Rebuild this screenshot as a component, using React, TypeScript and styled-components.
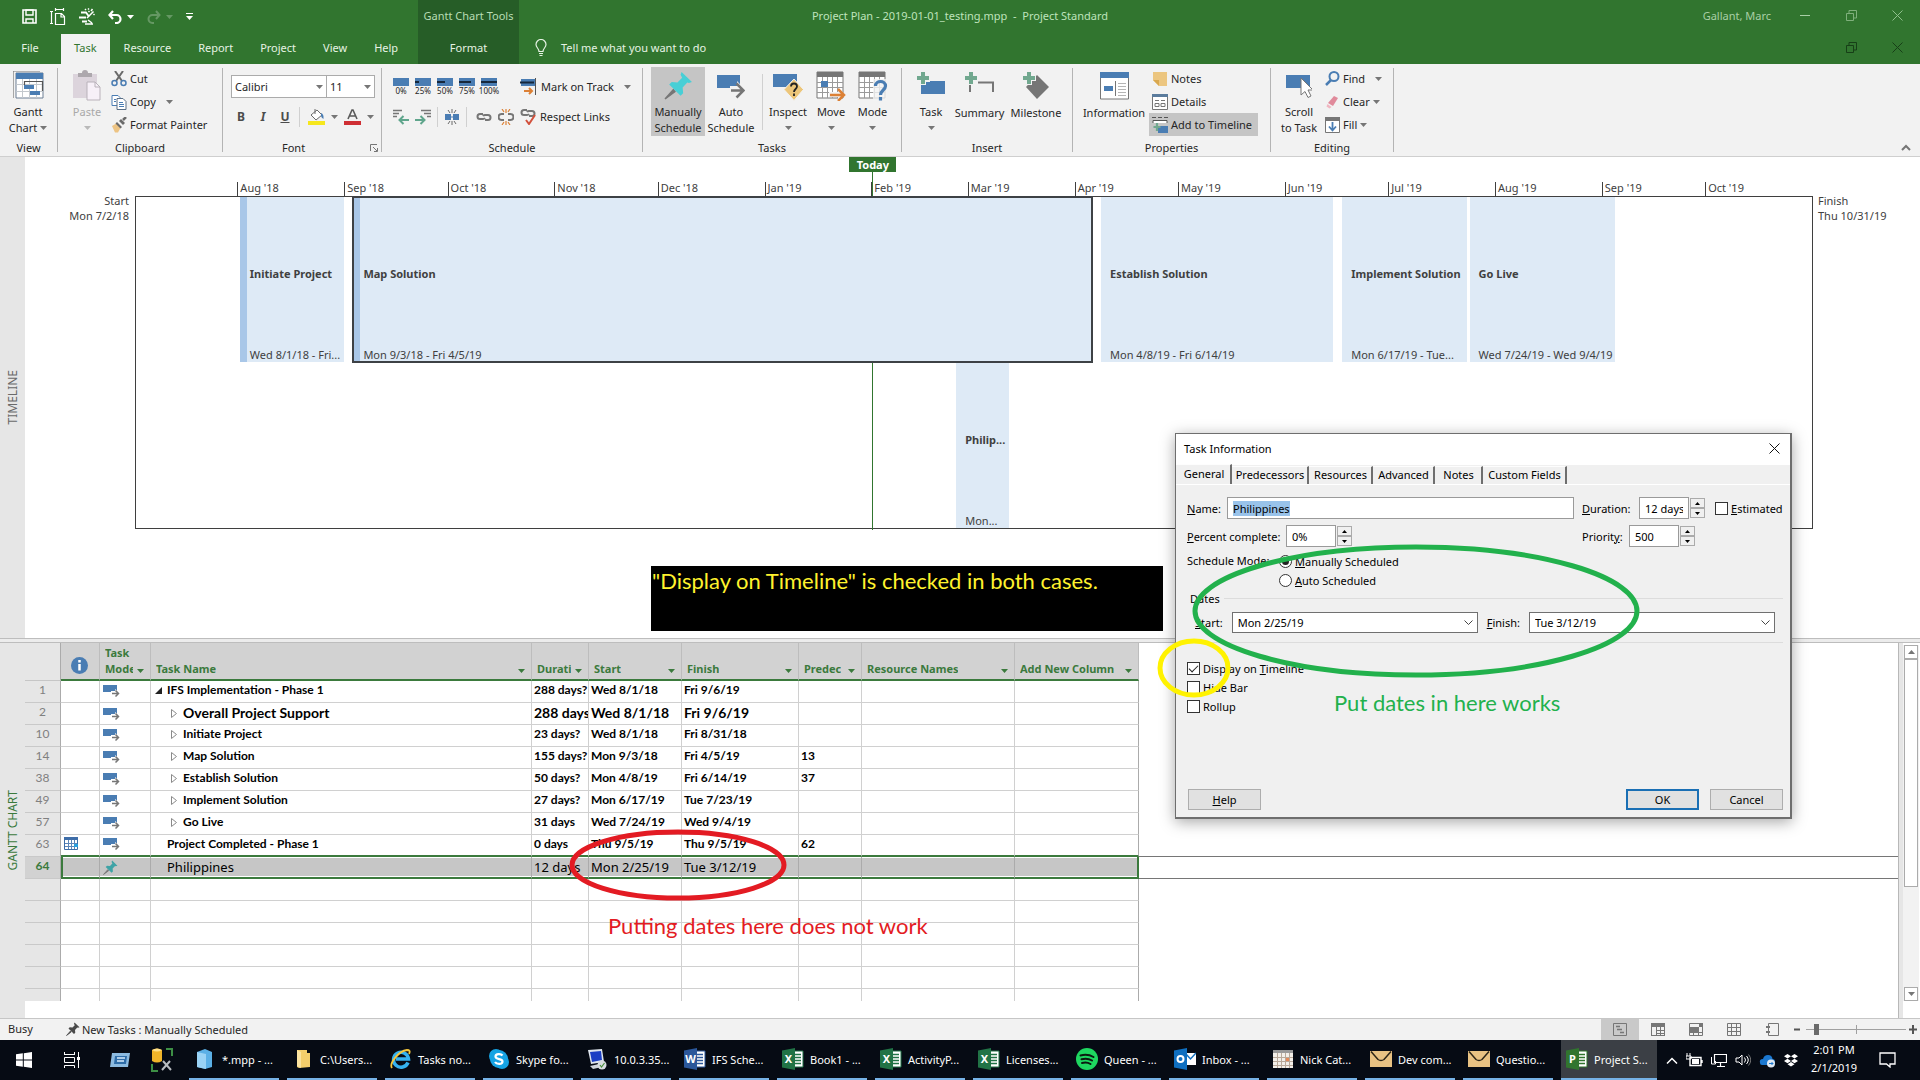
import React, { useEffect, useRef } from "react";
import styled, { createGlobalStyle, css } from "styled-components";

const UI = `"Noto Sans", "Open Sans", sans-serif`;
const SHEET = `Lato, "Noto Sans", sans-serif`;
const GREEN = "#31752f";
const BLUE = "#4a7db3";
const GREY = "#767676";

const GlobalStyle = createGlobalStyle`
  *, *::before, *::after { box-sizing: border-box; }
  body { margin: 0; background: #fff; font-family: ${UI}; font-size: 11px; color: #262626; }
  button, input, select { font: inherit; color: inherit; margin: 0; }
  button { background: none; border: 0; padding: 0; }
  svg { display: block; flex: none; }
`;

const App_ = styled.div`
  position: relative;
  min-height: 100vh;
  display: flex;
  flex-direction: column;
  overflow: hidden;
`;

/* ---------- small shared drawings ---------- */

type IconProps = { w?: number; h?: number; box?: string; children: React.ReactNode };
const Icon = ({ w = 16, h = 16, box, children }: IconProps) => (
  <svg width={w} height={h} viewBox={box ?? `0 0 ${w} ${h}`} fill="none" aria-hidden="true">
    {children}
  </svg>
);

const Caret = ({ color = GREY }: { color?: string }) => (
  <Icon w={7} h={4}>
    <path d="M0 0h7L3.500 4z" fill={color} />
  </Icon>
);

const Pin = ({ size = 16, color = "#48cfd6", needle = "#767676" }) => (
  <Icon w={size} h={size} box="0 0 28 28">
    <path d="M9 18 1 27l9.500-7z" fill={needle} stroke={needle} strokeWidth="1.500" />
    <path d="M17 1l10 9.500-3 1-1.500-.5-4.500 5 .5 5.500-2.500 2.500L5 13l2.500-2.500 5.500.5 4.500-4.500L16 3.500z" fill={color} />
  </Icon>
);

/* ---------- header ---------- */

const Header = styled.header`
  background: ${GREEN};
  color: #e6f3e4;
`;
const TitleRow = styled.div`
  height: 34px;
  display: grid;
  grid-template-columns: 1fr auto 1fr;
`;
const TitleLeft = styled.div`
  display: flex;
`;
const QuickAccess = styled.div`
  width: 418px;
  display: flex;
  align-items: center;
  padding: 0 0 1px 22px;
  gap: 13px;
`;
const QuickButton = styled.button<{ $dim?: boolean }>`
  display: flex;
  align-items: center;
  gap: 5px;
  opacity: ${(p) => (p.$dim ? 0.25 : 1)};
`;
const ContextTitle = styled.div`
  width: 101px;
  background: #265d27;
  color: #b7dcb4;
  display: flex;
  align-items: center;
  justify-content: center;
  padding-bottom: 3px;
  white-space: nowrap;
`;
const DocTitle = styled.h1`
  margin: 0;
  font-size: 11px;
  font-weight: 400;
  color: #bfe3bc;
  align-self: center;
  padding-bottom: 3px;
  white-space: pre;
`;
const TitleRight = styled.div`
  display: flex;
  align-items: center;
  justify-content: flex-end;
  padding-bottom: 3px;
  color: #a9cfa6;
`;
const UserName = styled.span`
  margin-right: 11px;
`;
const WinButton = styled.button`
  width: 46px;
  display: flex;
  align-items: center;
  justify-content: center;
`;
const TabRow = styled.nav`
  height: 30px;
  display: flex;
`;
const Tabs = styled.div`
  width: 418px;
  display: flex;
  gap: 1px;
`;
const Tab = styled.button<{ $active?: boolean; $file?: boolean }>`
  padding: 0 13px 3px;
  min-width: ${(p) => (p.$file ? "60px" : "0")};
  ${(p) => p.$active && css`
    background: #f2f2f2;
    color: ${GREEN};
  `}
`;
const ContextTab = styled.button`
  width: 101px;
  padding-bottom: 3px;
  background: #265d27;
`;
const TellMe = styled.button`
  display: flex;
  align-items: center;
  gap: 14px;
  margin-left: 16px;
  padding-bottom: 3px;
`;
const TabRowEnd = styled.div`
  margin-left: auto;
  padding-bottom: 3px;
  display: flex;
`;

/* ---------- ribbon ---------- */

const Ribbon = styled.div`
  height: 93px;
  background: #f2f2f2;
  border-bottom: 1px solid #cfcfcf;
  display: flex;
`;
const Group = styled.section<{ $w: number }>`
  width: ${(p) => p.$w}px;
  display: flex;
  flex-direction: column;
`;
const GroupBody = styled.div<{ $pad?: number }>`
  height: 76px;
  padding: 3px 0 0 ${(p) => p.$pad ?? 6}px;
  display: flex;
`;
const GroupLabel = styled.div`
  display: flex;
  align-items: center;
  justify-content: center;
  line-height: 12px;
  padding-top: 2px;
`;
const Launcher = styled.button`
  margin-left: auto;
  margin-right: 3px;
`;
const FontLabel = styled(GroupLabel)`
  padding-left: 59px;
`;
const Rule = styled.div`
  width: 1px;
  margin: 4px 0;
  background: #b4b4b4;
`;
const InnerRule = styled.div<{ $h?: number }>`
  width: 1px;
  height: ${(p) => p.$h ?? 20}px;
  background: #d0d0d0;
`;
const TasksRule = styled(InnerRule)`
  margin: 7px 3px 0 5px;
`;
const Big = styled.button<{ $w: number; $on?: boolean; $off?: boolean }>`
  width: ${(p) => p.$w}px;
  height: 69px;
  background: ${(p) => (p.$on ? "#c5c5c5" : "none")};
  color: ${(p) => (p.$off ? "#a9a9a9" : "inherit")};
  display: flex;
  flex-direction: column;
  align-items: center;
  white-space: nowrap;
`;
const BigIcon = styled.span`
  height: 38px;
  display: flex;
  align-items: center;
`;
const BigLine = styled.span`
  line-height: 16px;
  min-height: 16px;
  display: flex;
  align-items: center;
  gap: 3px;
`;
const SmallCol = styled.div`
  display: flex;
  flex-direction: column;
`;
const Small = styled.button<{ $on?: boolean }>`
  height: 23px;
  display: flex;
  align-items: center;
  gap: 3px;
  padding: 0 6px 0 3px;
  background: ${(p) => (p.$on ? "#c5c5c5" : "none")};
  white-space: nowrap;
`;
const CaretGap = styled.span<{ $w: number }>`
  padding-left: ${(p) => p.$w}px;
`;

const Rows = styled.div`
  display: flex;
  flex-direction: column;
  padding-top: 8px;
  gap: 7px;
`;
const ToolRow = styled.div`
  display: flex;
  align-items: center;
  height: 23px;
  gap: 6px;
`;
const GlyphRow = styled(ToolRow)`
  padding-left: 2px;
`;
const Picker = styled.label<{ $w: number }>`
  width: ${(p) => p.$w}px;
  height: 23px;
  display: grid;
  align-items: center;
  background: #fff;
  border: 1px solid #ababab;
  & > * { grid-area: 1 / 1; }
  & > svg { justify-self: end; margin-right: 3px; pointer-events: none; }
  & + & { margin-left: -7px; }
`;
const PlainSelect = styled.select`
  appearance: none;
  border: 0;
  background: transparent;
  width: 100%;
  height: 100%;
  padding: 0 3px;
  outline: 0;
`;
const Glyph = styled.button<{ $kind?: "b" | "i" | "u" }>`
  width: 16px;
  font-size: 12px;
  color: #4c4c4c;
  font-weight: 700;
  font-style: ${(p) => (p.$kind === "i" ? "italic" : "normal")};
  text-decoration: ${(p) => (p.$kind === "u" ? "underline" : "none")};
`;
const IconBtn = styled.button`
  display: flex;
  align-items: center;
  gap: 6px;
`;
const ColourBtn = styled(IconBtn)`
  margin-left: 2px;
`;
const Percent = styled.button`
  width: 16px;
  display: flex;
  flex-direction: column;
  align-items: center;
  font-size: 8px;
  line-height: 8px;
  gap: 1px;
`;
const TrackBtn = styled.button`
  display: flex;
  align-items: center;
  gap: 4px;
  white-space: nowrap;
`;
const PushTrack = styled(TrackBtn)`
  margin-left: 17px;
`;
const LinkBtn = styled(IconBtn)`
  margin-left: 3px;
`;
const RibbonEnd = styled.div`
  margin-left: auto;
  align-self: flex-end;
  padding: 0 9px 5px 0;
`;

/* ---------- timeline ---------- */

const Pane = styled.section<{ $grow?: boolean }>`
  display: flex;
  flex: ${(p) => (p.$grow ? "1 0 auto" : "none")};
`;
const SideLabel = styled.div<{ $tone: string }>`
  width: 25px;
  flex: none;
  background: #e6e6e6;
  color: ${(p) => p.$tone};
  display: flex;
  align-items: center;
  justify-content: center;
  & > span {
    writing-mode: vertical-rl;
    transform: rotate(180deg);
    white-space: nowrap;
    font-size: 12px;
  }
`;
const TimelineBody = styled.div`
  flex: 1;
  min-width: 0;
  display: grid;
  grid-template-columns: 110px 1fr 107px;
  color: #404040;
`;
const EdgeDate = styled.div<{ $end?: boolean }>`
  padding: 36px 6px 0 5px;
  line-height: 15px;
  text-align: ${(p) => (p.$end ? "left" : "right")};
`;
const Track = styled.div`
  position: relative;
  padding: 39px 0 109px;
`;
const Lanes = styled.div`
  border: 1px solid #3f3f3f;
  height: 333px;
`;
const Lane = styled.div`
  position: relative;
  height: 166px;
`;
const MonthTick = styled.span`
  position: absolute;
  top: 25px;
  height: 14px;
  margin-left: -1px;
  padding-left: 2px;
  border-left: 1px solid #3f3f3f;
  line-height: 11px;
  white-space: nowrap;
`;
const TodayMark = styled.div`
  position: absolute;
  top: 0;
  bottom: 108px;
  width: 47px;
  margin-left: -23px;
  display: flex;
  flex-direction: column;
  align-items: center;
`;
const TodayBadge = styled.span`
  width: 47px;
  background: ${GREEN};
  color: #fff;
  font-weight: 700;
  line-height: 15px;
  text-align: center;
`;
const TodayLine = styled.span`
  flex: 1;
  width: 1px;
  background: ${GREEN};
`;
const Bar = styled.div<{ $edge?: boolean; $sel?: boolean }>`
  position: absolute;
  top: 0;
  height: 165px;
  background: #deeaf6;
  border: 0 solid #a9c7e8;
  border-left-width: ${(p) => (p.$edge ? "7px" : "0")};
  padding-left: ${(p) => (p.$edge ? "3px" : "9px")};
  outline: ${(p) => (p.$sel ? "2px solid #3d4145" : "0")};
  outline-offset: -1px;
  display: flex;
  flex-direction: column;
  justify-content: flex-end;
  white-space: nowrap;
`;
const BarName = styled.strong`
  line-height: 16px;
  margin-bottom: 66px;
`;
const BarDates = styled.span`
  line-height: 14px;
`;
const Splitter = styled.div`
  height: 5px;
  background: #ececec;
  border: 1px solid #bdbdbd;
  border-width: 1px 0;
`;

/* ---------- sheet ---------- */

const Sheet = styled.table`
  width: 1114px;
  flex: none;
  align-self: flex-start;
  table-layout: fixed;
  border-spacing: 0;
  font-family: ${SHEET};
  color: #000;
`;
const HeadCell = styled.th`
  height: 38px;
  padding: 0 6px 2px 5px;
  background: #d2d2d2;
  border-right: 1px solid #bdbdbd;
  border-bottom: 2px solid #3b7a3d;
  color: #3b7a3d;
  font-family: ${UI};
  font-size: 11px;
  line-height: 16px;
  text-align: left;
  vertical-align: bottom;
`;
const HeadCorner = styled(HeadCell)`
  background: #e6e6e6;
  border-right-color: #ababab;
  border-bottom: 1px solid #c6c6c6;
`;
const HeadInner = styled.div<{ $center?: boolean }>`
  display: flex;
  align-items: flex-end;
  justify-content: ${(p) => (p.$center ? "center" : "space-between")};
  gap: 4px;
  padding-bottom: ${(p) => (p.$center ? "3px" : "0")};
  & > svg { margin-bottom: ${(p) => (p.$center ? "0" : "4px")}; }
`;
const HeadText = styled.span`
  overflow: hidden;
  white-space: pre;
`;
const RowId = styled.th<{ $sel?: boolean; $last?: boolean }>`
  height: ${(p) => (p.$last ? 12 : 22)}px;
  padding: 0 0 3px;
  background: ${(p) => (p.$sel ? "#d2d2d2" : "#e6e6e6")};
  border-right: 1px solid #ababab;
  border-bottom: ${(p) => (p.$last ? "0" : "1px solid #c9c9c9")};
  color: ${(p) => (p.$sel ? "#3b7a3d" : "#808080")};
  font-size: 12px;
  font-weight: ${(p) => (p.$sel ? 700 : 400)};
  line-height: 14px;
  text-align: center;
`;
const Cell = styled.td<{ $sel?: boolean; $above?: boolean; $last?: boolean; $big?: boolean }>`
  height: ${(p) => (p.$last ? 12 : 22)}px;
  padding: 0 2px ${(p) => (p.$last || p.$sel ? 0 : p.$big ? 1 : 3)}px;
  border-right: 1px solid #d0d0d0;
  border-bottom: ${(p) => (p.$last ? "0" : p.$above || p.$sel ? "2px solid #3b7a3d" : "1px solid #d0d0d0")};
  font-size: ${(p) => (p.$sel ? 13 : p.$big ? 14 : 12)}px;
  font-weight: ${(p) => (p.$sel ? 400 : 700)};
  line-height: 16px;
  white-space: nowrap;
  overflow: hidden;
  &:last-child { border-right-color: #ababab; }
  ${(p) => p.$sel && css`
    background: #c6c6c6;
    font-family: ${UI};
    box-shadow: inset 0 1px #fff, inset 0 -1px #fff;
    border-right-color: #ababab;
    &:nth-child(2) { border-left: 2px solid #3b7a3d; }
    &:last-child { border-right: 2px solid #3b7a3d; }
  `}
`;
const TaskName = styled.div<{ $level: number }>`
  display: flex;
  align-items: center;
  gap: 5px;
  padding-left: ${(p) => (p.$level === 2 ? 18 : 2)}px;
`;
const NoToggle = styled.span`
  width: 7px;
`;
const IconCell = styled.div`
  padding-left: 1px;
`;
const ModeCell = styled(IconCell)`
  padding-top: 2px;
`;
const ChartPane = styled.div`
  flex: 1;
  padding-top: 213px;
  border-right: 1px solid #b8b8b8;
`;
const ChartRow = styled.div`
  height: 23px;
  border: 1px solid #767676;
  border-width: 1px 0;
`;
const ScrollEdge = styled.div`
  width: 4px;
  background: #e6e6e6;
`;
const ScrollBar = styled.div`
  width: 16px;
  margin: 2px 1px 17px 0;
  background: #f2f2f2;
  display: flex;
  flex-direction: column;
  align-items: center;
`;
const ScrollBtn = styled.button`
  width: 14px;
  height: 14px;
  background: #fff;
  border: 1px solid #ababab;
  display: flex;
  align-items: center;
  justify-content: center;
`;
const ScrollThumb = styled.div`
  width: 14px;
  height: 228px;
  margin-bottom: auto;
  background: #fff;
  border: 1px solid #ababab;
`;

/* ---------- status bar ---------- */

const StatusBar = styled.footer`
  height: 22px;
  background: #f2f2f2;
  border-top: 1px solid #c6c6c6;
  display: flex;
  align-items: center;
  padding: 0 3px 0 8px;
`;
const Busy = styled.span`
  width: 58px;
  padding-bottom: 2px;
`;
const NewTasks = styled.span`
  display: flex;
  align-items: center;
  gap: 2px;
  padding-bottom: 1px;
`;
const ViewButtons = styled.div`
  margin-left: auto;
  display: flex;
  height: 100%;
`;
const ViewButton = styled.button<{ $on?: boolean }>`
  width: 38px;
  display: flex;
  align-items: center;
  justify-content: center;
  background: ${(p) => (p.$on ? "#c9c9c9" : "none")};
`;
const ZoomSlider = styled.input`
  appearance: none;
  width: 100px;
  height: 13px;
  margin: 0 3px 0 4px;
  background:
    linear-gradient(#a0a0a0, #a0a0a0) 50px 50% / 1px 9px no-repeat,
    linear-gradient(#a0a0a0, #a0a0a0) 0 50% / 100% 1px no-repeat;
  &::-webkit-slider-thumb {
    appearance: none;
    width: 5px;
    height: 11px;
    background: #6a6a6a;
  }
`;

/* ---------- task bar ---------- */

const TaskBar = styled.div`
  height: 40px;
  background: #060b14;
  color: #fff;
  display: flex;
`;
const Start = styled.div`
  width: 189px;
  display: flex;
`;
const StartItem = styled.button<{ $tight?: boolean }>`
  width: ${(p) => (p.$tight ? 36 : 48)}px;
  display: flex;
  align-items: center;
  justify-content: center;
`;
const AppList = styled.div`
  display: flex;
  gap: 8px;
`;
const AppButton = styled.button<{ $on?: boolean }>`
  width: ${(p) => (p.$on ? 96 : 90)}px;
  display: flex;
  align-items: center;
  gap: 6px;
  padding-left: 5px;
  border-bottom: 2px solid #76b2e6;
  background: ${(p) => (p.$on ? "#3b3f45" : "none")};
  white-space: nowrap;
`;
const Tray = styled.div`
  margin-left: auto;
  display: flex;
  align-items: center;
  gap: 8px;
  padding-right: 24px;
`;
const Clock = styled.div`
  width: 52px;
  text-align: center;
  line-height: 18px;
  margin: 0 11px 2px 2px;
`;

/* ---------- dialog ---------- */

const Dialog = styled.form`
  position: absolute;
  left: 1175px;
  top: 433px;
  width: 617px;
  height: 386px;
  background: #f0f0f0;
  border: 1px solid #6e6e6e;
  border-width: 1px 2px 2px 1px;
  box-shadow: 0 3px 14px rgba(0, 0, 0, 0.35);
  color: #000;
  display: flex;
  flex-direction: column;
`;
const DialogTitle = styled.div`
  height: 31px;
  background: #fff;
  display: flex;
  align-items: center;
  justify-content: space-between;
  padding: 0 10px 2px 8px;
`;
const DialogTabs = styled.div`
  display: flex;
  align-items: flex-end;
  height: 20px;
  padding-left: 1px;
  border-bottom: 1px solid #fff;
`;
const DialogTab = styled.button<{ $w: number; $on?: boolean }>`
  width: ${(p) => p.$w}px;
  height: ${(p) => (p.$on ? 20 : 18)}px;
  padding-bottom: ${(p) => (p.$on ? 3 : 2)}px;
  padding-left: 1px;
  border-right: 2px solid #6e6e6e;
  border-top: 1px solid #fdfdfd;
  background: #f0f0f0;
  white-space: nowrap;
`;
const DialogBody = styled.div`
  flex: 1;
  display: flex;
  flex-direction: column;
  padding: 9px 7px 0 11px;
`;
const Line = styled.div`
  display: flex;
  align-items: center;
  height: 28px;
`;
const FieldLabel = styled.label<{ $w: number }>`
  width: ${(p) => p.$w}px;
  white-space: nowrap;
`;
const TextBox = styled.input<{ $w?: number }>`
  width: ${(p) => (p.$w ? `${p.$w}px` : "auto")};
  flex: ${(p) => (p.$w ? "none" : "1")};
  min-width: 0;
  height: 22px;
  padding: 0 5px;
  border: 1px solid #9a9a9a;
  background: #fff;
  outline: 0;
  &::selection { background: #99c3ea; color: #000; }
`;
const Spin = styled.span`
  width: 15px;
  margin: 0 10px 0 1px;
  display: flex;
  flex-direction: column;
`;
const SpinBtn = styled.button`
  height: 10px;
  border: 1px solid #ababab;
  background: #f0f0f0;
  display: flex;
  align-items: center;
  justify-content: center;
`;
const RightFields = styled.div`
  width: 201px;
  display: flex;
  align-items: center;
  margin-left: 8px;
`;
const RightAuto = styled(RightFields)`
  margin-left: auto;
`;
const Check = styled.label`
  display: flex;
  align-items: center;
  gap: 3px;
  height: 19px;
  white-space: nowrap;
`;
const Tick = styled.input`
  appearance: none;
  width: 13px;
  height: 13px;
  border: 1px solid #333;
  background: #fff;
  display: grid;
  place-items: center;
  border-radius: ${(p) => (p.type === "radio" ? "50%" : "0")};
  &:checked::after {
    content: "";
    ${(p) => p.type === "radio"
      ? css`width: 7px; height: 7px; border-radius: 50%; background: #222;`
      : css`width: 9px; height: 5px; border: solid #222; border-width: 0 0 1px 1px; rotate: -45deg; margin-bottom: 3px;`}
  }
`;
const ModeRow = styled.div`
  display: flex;
  padding-top: 2px;
`;
const ModeLabel = styled.span`
  width: 92px;
  line-height: 17px;
`;
const ModeChoices = styled.div`
  display: flex;
  flex-direction: column;
`;
const DatesHead = styled.div`
  display: flex;
  align-items: center;
  gap: 4px;
  height: 16px;
  padding-left: 3px;
  &::after { content: ""; flex: 1; height: 1px; background: #dcdcdc; }
`;
const DatesRow = styled.div`
  display: flex;
  align-items: center;
  gap: 9px;
  height: 37px;
  padding: 0 8px 4px;
  margin-bottom: 16px;
  border-bottom: 1px solid #dcdcdc;
`;
const DatePick = styled.span`
  flex: 1;
  height: 21px;
  display: grid;
  align-items: center;
  background: #fff;
  border: 1px solid #707070;
  & > * { grid-area: 1 / 1; }
  & > svg { justify-self: end; margin-right: 4px; pointer-events: none; }
`;
const DateSelect = styled(PlainSelect)`
  padding: 0 5px;
`;
const Buttons = styled.div`
  display: flex;
  gap: 11px;
  margin-top: auto;
  padding: 0 0 7px 1px;
`;
const PushButton = styled.button<{ $main?: boolean; $left?: boolean }>`
  width: 73px;
  height: 21px;
  background: #e1e1e1;
  border: ${(p) => (p.$main ? "2px solid #1a6fb4" : "1px solid #adadad")};
  margin-right: ${(p) => (p.$left ? "auto" : "0")};
`;

/* ---------- hand-drawn notes ---------- */

const Ring = styled.svg<{ $x: number; $y: number }>`
  position: absolute;
  left: ${(p) => p.$x}px;
  top: ${(p) => p.$y}px;
  pointer-events: none;
`;
const Note = styled.p<{ $x: number; $y: number; $c: string }>`
  position: absolute;
  left: ${(p) => p.$x}px;
  top: ${(p) => p.$y}px;
  margin: 0;
  color: ${(p) => p.$c};
  font-family: ${SHEET};
  font-size: 22px;
  line-height: 30px;
  white-space: nowrap;
`;
const BlackNote = styled(Note)`
  width: 512px;
  height: 65px;
  padding-left: 1px;
  background: #000;
`;

/* ---------- data ---------- */

const HOUR = 3600000;
const T0 = Date.UTC(2018, 6, 2);
const SPAN = 487;
const at = (y: number, m: number, d: number, h = 0) =>
  ((Date.UTC(y, m - 1, d, h) - T0) / HOUR / 24 / SPAN) * 100;

const months: [string, number][] = [
  ["Aug '18", at(2018, 8, 1)], ["Sep '18", at(2018, 9, 1)], ["Oct '18", at(2018, 10, 1)],
  ["Nov '18", at(2018, 11, 1)], ["Dec '18", at(2018, 12, 1)], ["Jan '19", at(2019, 1, 1)],
  ["Feb '19", at(2019, 2, 1)], ["Mar '19", at(2019, 3, 1)], ["Apr '19", at(2019, 4, 1)],
  ["May '19", at(2019, 5, 1)], ["Jun '19", at(2019, 6, 1)], ["Jul '19", at(2019, 7, 1)],
  ["Aug '19", at(2019, 8, 1)], ["Sep '19", at(2019, 9, 1)], ["Oct '19", at(2019, 10, 1)],
];

type BarData = { name: string; dates: string; from: number; to: number; edge?: boolean; sel?: boolean };
const lanes: BarData[][] = [
  [
    { name: "Initiate Project", dates: "Wed 8/1/18 - Fri...", from: at(2018, 8, 1, 4), to: at(2018, 8, 31, 12), edge: true },
    { name: "Map Solution", dates: "Mon 9/3/18 - Fri 4/5/19", from: at(2018, 9, 3, 4), to: at(2019, 4, 5, 17), edge: true, sel: true },
    { name: "Establish Solution", dates: "Mon 4/8/19 - Fri 6/14/19", from: at(2019, 4, 8, 10), to: at(2019, 6, 14, 17) },
    { name: "Implement Solution", dates: "Mon 6/17/19 - Tue...", from: at(2019, 6, 17, 12), to: at(2019, 7, 23, 17) },
    { name: "Go Live", dates: "Wed 7/24/19 - Wed 9/4/19", from: at(2019, 7, 24, 12), to: at(2019, 9, 4, 17) },
  ],
  [{ name: "Philip...", dates: "Mon...", from: at(2019, 2, 25, 8), to: at(2019, 3, 12, 17) }],
];

type Row = { id: string; name: string; level: 0 | 1 | 2; dur: string; start: string; finish: string; pred?: string; big?: boolean; open?: boolean; mark?: boolean; sel?: boolean };
const rows: Row[] = [
  { id: "1", name: "IFS Implementation - Phase 1", level: 1, dur: "288 days?", start: "Wed 8/1/18", finish: "Fri 9/6/19", open: true },
  { id: "2", name: "Overall Project Support", level: 2, dur: "288 days", start: "Wed 8/1/18", finish: "Fri 9/6/19", big: true },
  { id: "10", name: "Initiate Project", level: 2, dur: "23 days?", start: "Wed 8/1/18", finish: "Fri 8/31/18" },
  { id: "14", name: "Map Solution", level: 2, dur: "155 days?", start: "Mon 9/3/18", finish: "Fri 4/5/19", pred: "13" },
  { id: "38", name: "Establish Solution", level: 2, dur: "50 days?", start: "Mon 4/8/19", finish: "Fri 6/14/19", pred: "37" },
  { id: "49", name: "Implement Solution", level: 2, dur: "27 days?", start: "Mon 6/17/19", finish: "Tue 7/23/19" },
  { id: "57", name: "Go Live", level: 2, dur: "31 days", start: "Wed 7/24/19", finish: "Wed 9/4/19" },
  { id: "63", name: "Project Completed - Phase 1", level: 0, dur: "0 days", start: "Thu 9/5/19", finish: "Thu 9/5/19", pred: "62", mark: true },
  { id: "64", name: "Philippines", level: 0, dur: "12 days", start: "Mon 2/25/19", finish: "Tue 3/12/19", big: true, sel: true },
];
const columns = ["Task Name", "Durati", "Start", "Finish", "Predec", "Resource Names", "Add New Column"];
const widths = [36, 39, 51, 381, 57, 93, 117, 63, 153, 124];

/* ---------- icons ---------- */

const Restore = ({ c }: { c: string }) => (
  <Icon w={11} h={11}><path d="M.5 3.500h7v7h-7zM3 3V.5h7.500V8H8" stroke={c} /></Icon>
);
const Close = ({ c, s = 11 }: { c: string; s?: number }) => (
  <Icon w={s} h={s} box="0 0 11 11"><path d="M.5.5l10 10M10.500.5l-10 10" stroke={c} /></Icon>
);
const AutoSmall = () => (
  <Icon w={17} h={13}>
    <path d="M0 0h14v7H0z" fill={BLUE} />
    <path d="M8 6h4V4l5 4.500-5 4V10H8z" fill="#fff" />
    <path d="M9 8.500h6M12.500 5.500l3 3-3 3" stroke={GREY} strokeWidth="1.500" />
  </Icon>
);
const GridPic = ({ children }: { children?: React.ReactNode }) => (
  <Icon w={30} h={30}>
    <path d="M1 1h26v26H1z" fill="#fff" stroke={GREY} />
    <path d="M1 1h26v5H1z" fill={GREY} />
    <path d="M1 11.500h26M1 16.500h26M1 21.500h26M6.500 6v21M11.500 6v21M16.500 6v21M21.500 6v21" stroke="#9a9a9a" />
    {children}
  </Icon>
);
const Plus = () => <path d="M4 0h4v4h4v4H8v4H4V8H0V4h4z" fill="#71a88f" />;
const Chain = ({ c = GREY }: { c?: string }) => (
  <g stroke={c} strokeWidth="2">
    <path d="M7 5H4a2.500 2.500 0 0 0 0 5h3a2.500 2.500 0 0 0 2-1" />
    <path d="M9 11h3a2.500 2.500 0 0 0 0-5H9a2.500 2.500 0 0 0-2 1" />
  </g>
);
const OfficeIcon = ({ letter, c }: { letter: string; c: string }) => (
  <Icon w={22} h={22}>
    <path d="M10 3h11v16H10z" fill="#fff" stroke={c} />
    <path d="M13 6.500h6M13 9.500h6M13 12.500h6M13 15.500h6" stroke={c} strokeWidth="1.500" />
    <path d="M0 2.500 13 0v22L0 19.500z" fill={c} />
    <text x="6.500" y="15" fontSize="11" fontWeight="700" fill="#fff" textAnchor="middle" fontFamily={UI}>{letter}</text>
  </Icon>
);
const Envelope = () => (
  <Icon w={22} h={18}>
    <path d="M0 1h22v16H0z" fill="#e8c283" />
    <path d="M1 1.500 8 9.500q3 2 6 0l7-8" stroke="#2b2416" strokeWidth="1.500" />
  </Icon>
);
const taskApps: [string, React.ReactNode][] = [
  ["*.mpp - ...", <Icon w={22} h={22}><path d="M3 4l8-3 7 3v15l-7 2-8-2z" fill="#5bb0e6" /><path d="M3 4l9 2v15l-9-2z" fill="#9ad3f5" /></Icon>],
  ["C:\\Users...", <Icon w={22} h={22}><path d="M5 2h10v3h3v14l-11 1-2-1z" fill="#f4ce6b" /><path d="M5 2l4 2v16l-4-2z" fill="#fbe3a0" /></Icon>],
  ["Tasks no...", <Icon w={22} h={22}><path d="M18 14.500A7.500 7.500 0 1 1 18.500 11H6" stroke="#35b2ef" strokeWidth="3.500" /><path d="M2 20C-1 16 8 3 17 2q4 0 2 4" stroke="#f5c63c" strokeWidth="1.800" /></Icon>],
  ["Skype fo...", <Icon w={22} h={22}><rect x="1" y="1" width="14" height="14" rx="7" fill="#16a3e3" /><rect x="7" y="7" width="14" height="14" rx="7" fill="#16a3e3" /><circle cx="11" cy="11" r="9" fill="#16a3e3" /><path d="M14.500 7.500C13 5.500 7.500 5.500 7.500 8.500c0 3.500 7 1.700 7 5 0 3.200-6 3-7.500.5" stroke="#fff" strokeWidth="2.200" /></Icon>],
  ["10.0.3.35...", <Icon w={22} h={22}><path d="M2 2l14-1 2 13-13 2z" fill="#dfe6ee" /><path d="M4 4l11-1 1 9-10 2z" fill="#1c3fc4" /><path d="M4 18l9-2 3 3-9 2z" fill="#cfd4da" /><circle cx="16" cy="17" r="4.500" fill="#d8dde0" /><path d="M14 17l1.500 2 3-4" stroke="#4a8f3c" strokeWidth="1.200" /></Icon>],
  ["IFS Sche...", <OfficeIcon letter="W" c="#2b579a" />],
  ["Book1 - ...", <OfficeIcon letter="X" c="#217346" />],
  ["ActivityP...", <OfficeIcon letter="X" c="#217346" />],
  ["Licenses...", <OfficeIcon letter="X" c="#217346" />],
  ["Queen - ...", <Icon w={22} h={22}><circle cx="11" cy="11" r="11" fill="#1ed760" /><path d="M4.500 7.500q7-2 13 1.500M5.500 11.300q6-1.500 10.500 1.200M6 15q5-1.200 8.500 1" stroke="#0b1a10" strokeWidth="2" strokeLinecap="round" /></Icon>],
  ["Inbox - ...", <Icon w={22} h={22}><path d="M11 5h11v12H11z" fill="#fff" /><path d="M12 6l4.500 5L22 5" stroke="#0f6fc0" strokeWidth="1.500" /><path d="M0 2.500 13 0v22L0 19.500z" fill="#0f6fc0" /><circle cx="6.500" cy="11" r="3" stroke="#fff" strokeWidth="2" /></Icon>],
  ["Nick Cat...", <Icon w={22} h={20}><path d="M1 1h20v18H1z" fill="#f3efe9" /><path d="M1 1h20v3H1z" fill="#9a9a9a" /><path d="M1 8.500h20M1 12.500h20M1 16.500h20M5.500 4v15M9.500 4v15M13.500 4v15M17.500 4v15" stroke="#b9a99a" /><path d="M14 9h3v3h-3z" fill="#e58a5a" /></Icon>],
  ["Dev com...", <Envelope />],
  ["Questio...", <Envelope />],
];

const percentBars: [string, number][] = [["0%", 0], ["25%", 4], ["50%", 8], ["75%", 12], ["100%", 16]];

/* ---------- parts ---------- */

const HeaderBar = () => (
  <Header>
    <TitleRow>
      <TitleLeft>
        <QuickAccess>
          <QuickButton aria-label="Save"><Icon w={15} h={15}><path d="M1 1h13v13H1z" stroke="#fff" strokeWidth="1.600" /><path d="M4 1h7v5H4zM4 14v-4h7v4" stroke="#fff" strokeWidth="1.400" /></Icon></QuickButton>
          <QuickButton aria-label="Page setup"><Icon w={16} h={17}><path d="M5.500 5.500h6l3 3v8h-9zM11 5.500V9h3.500M1.500 3v13M0 3.500h3M0 15.500h3M5 1.500h9M5.500 0v3M13.500 0v3" stroke="#fff" strokeWidth="1.200" /></Icon></QuickButton>
          <QuickButton aria-label="Draw"><Icon w={16} h={17}><path d="M2 4.500h5l3 4M0 9.500h7M3 13.500h5" stroke="#fff" strokeWidth="1.800" /><path d="M8 10l6.500-6.500M9.500 4l1-1M12 3l1.500-2M6 2l1-1M9 1.500l1-1M14.500 7l1-1" stroke="#fff" strokeWidth="1.500" /><path d="M6 16h8M9 12l4 3" stroke="#fff" strokeWidth="1.500" /></Icon></QuickButton>
          <QuickButton aria-label="Undo"><Icon w={14} h={14}><path d="M1.500 5h7a4 4 0 0 1 0 8H7M5 1 1.500 5 5 9" stroke="#fff" strokeWidth="2.200" /></Icon><Caret color="#fff" /></QuickButton>
          <QuickButton $dim aria-label="Redo"><Icon w={14} h={14}><path d="M12.500 5h-7a4 4 0 0 0 0 8H7M9 1l3.500 4L9 9" stroke="#fff" strokeWidth="2" /></Icon><Caret color="#fff" /></QuickButton>
          <QuickButton aria-label="Customize"><Icon w={7} h={8}><path d="M0 .5h7" stroke="#fff" /><path d="M0 3h7L3.500 7z" fill="#fff" /></Icon></QuickButton>
        </QuickAccess>
        <ContextTitle>Gantt Chart Tools</ContextTitle>
      </TitleLeft>
      <DocTitle>{"Project Plan - 2019-01-01_testing.mpp  -  Project Standard"}</DocTitle>
      <TitleRight>
        <UserName>Gallant, Marc</UserName>
        <WinButton aria-label="Minimize"><Icon w={10} h={1}><path d="M0 .5h10" stroke="#a9cfa6" /></Icon></WinButton>
        <WinButton aria-label="Restore"><Restore c="#7fb07c" /></WinButton>
        <WinButton aria-label="Close"><Close c="#8fc08c" /></WinButton>
      </TitleRight>
    </TitleRow>
    <TabRow>
      <Tabs>
        <Tab $file>File</Tab>
        <Tab $active>Task</Tab>
        {["Resource", "Report", "Project", "View", "Help"].map((t) => <Tab key={t}>{t}</Tab>)}
      </Tabs>
      <ContextTab>Format</ContextTab>
      <TellMe>
        <Icon w={12} h={17}><path d="M4 12.500C4 9.500 1 8.500 1 5.500a5 5 0 0 1 10 0c0 3-3 4-3 7zM4 14.500h4M4.500 16.500h3" stroke="#e6f3e4" strokeWidth="1.200" /></Icon>
        Tell me what you want to do
      </TellMe>
      <TabRowEnd>
        <WinButton aria-label="Restore document"><Restore c="#173f17" /></WinButton>
        <WinButton aria-label="Close document"><Close c="#173f17" /></WinButton>
      </TabRowEnd>
    </TabRow>
  </Header>
);

const RibbonBar = () => (
  <Ribbon>
    <Group $w={57}>
      <GroupBody $pad={4}>
        <Big $w={48}>
          <BigIcon><Icon w={31} h={29}>
            <path d="M0 27V0h27" stroke={GREY} strokeWidth="1.200" />
            <path d="M3 2h27v25H3z" fill="#fff" stroke="#6c7f94" />
            <path d="M3 2h27v6H3z" fill={BLUE} />
            <path d="M9.500 8v19M16.500 8v19M23.500 8v19M3 13.500h27M3 20.500h27" stroke="#c3c8cd" />
            <path d="M11.500 14v-3.500h18V20" stroke="#555" strokeWidth="1.200" />
            <path d="M11 14h10v4H11zM17 20h10v4H17z" fill={BLUE} />
          </Icon></BigIcon>
          <BigLine>Gantt</BigLine>
          <BigLine>Chart <Caret /></BigLine>
        </Big>
      </GroupBody>
      <GroupLabel>View</GroupLabel>
    </Group>
    <Rule />
    <Group $w={164}>
      <GroupBody $pad={8}>
        <Big $w={42} $off>
          <BigIcon><Icon w={28} h={31}>
            <path d="M0 4h24v24H0z" fill="#dcd4dc" />
            <path d="M5 3h4q0-3 3-3t3 3h4v4H5z" fill="#ada8ad" />
            <path d="M14 12h8l5 5v13H14z" fill="#f7f0f8" stroke="#b9b2ba" />
            <path d="M22 12v5h5" stroke="#b9b2ba" />
          </Icon></BigIcon>
          <BigLine>Paste</BigLine>
          <BigLine><Caret color="#b9b9b9" /></BigLine>
        </Big>
        <SmallCol>
          <Small><Icon><path d="M4 0l7 10M12 0 5 10" stroke="#6a6a6a" strokeWidth="2" /><circle cx="3.500" cy="12" r="2.500" stroke={BLUE} strokeWidth="1.500" /><circle cx="12.500" cy="12" r="2.500" stroke={BLUE} strokeWidth="1.500" /></Icon>Cut</Small>
          <Small><Icon><path d="M1 1.500h6l2 2v8H1z" fill="#fff" stroke={BLUE} /><path d="M6 4.500h6l3 3v8H6z" fill="#fff" stroke="#5a6f86" /><path d="M8 8.500h4M8 10.500h5M8 12.500h5M3 5.500h2M3 7.500h2" stroke={BLUE} /></Icon>Copy<CaretGap $w={7}><Caret /></CaretGap></Small>
          <Small><Icon><path d="M1 9l5-3 4 4-3 5.500H4z" fill="#edc484" /><path d="M6 5l5 5-1.500 1.500-5-5zM8 4l2-2 4 4-2 2z" fill="#6a6a6a" /><path d="M12 3l3-3" stroke="#6a6a6a" strokeWidth="2.500" /></Icon>Format Painter</Small>
        </SmallCol>
      </GroupBody>
      <GroupLabel>Clipboard</GroupLabel>
    </Group>
    <Rule />
    <Group $w={158}>
      <GroupBody $pad={8}>
        <Rows>
          <ToolRow>
            <Picker $w={96}><PlainSelect aria-label="Font" defaultValue="Calibri"><option>Calibri</option></PlainSelect><Caret /></Picker>
            <Picker $w={49}><PlainSelect aria-label="Font size" defaultValue="11"><option>11</option></PlainSelect><Caret /></Picker>
          </ToolRow>
          <GlyphRow>
            <Glyph $kind="b">B</Glyph><Glyph $kind="i">I</Glyph><Glyph $kind="u">U</Glyph>
            <InnerRule />
            <ColourBtn aria-label="Fill colour"><Icon w={17} h={16}><path d="M3 6l6-5 5 5-6 5z" fill="#fff" stroke="#6a6a6a" /><path d="M7 0v5" stroke="#6a6a6a" /><path d="M13 4q3 1 2.500 6-2-1-2.500-3z" fill={BLUE} /><path d="M0 12h17v4H0z" fill="#f6e71d" /></Icon><Caret /></ColourBtn>
            <IconBtn aria-label="Font colour"><Icon w={17} h={16}><path d="M4 10l4-9h1l4 9M5.500 7h6" stroke="#5a5a5a" strokeWidth="1.600" /><path d="M0 12h17v4H0z" fill="#cf2f34" /></Icon><Caret /></IconBtn>
          </GlyphRow>
        </Rows>
      </GroupBody>
      <FontLabel>
        Font
        <Launcher aria-label="Font settings"><Icon w={8} h={8}><path d="M.5 7V.5H7M3 3l4 4M7.500 4v3.500H4" stroke={GREY} /></Icon></Launcher>
      </FontLabel>
    </Group>
    <Rule />
    <Group $w={260}>
      <GroupBody $pad={11}>
        <Rows>
          <ToolRow>
            {percentBars.map(([label, done]) => (
              <Percent key={label}>
                <Icon w={16} h={8}><path d="M0 0h16v8H0z" fill={BLUE} />{done > 0 && <path d={`M0 4h${done}`} stroke="#16283c" strokeWidth="2" />}</Icon>
                {label}
              </Percent>
            ))}
            <PushTrack>
              <Icon w={17} h={17}><path d="M1 1h14v7H1z" fill={BLUE} /><path d="M0 4.500h14" stroke="#16283c" strokeWidth="2" /><path d="M15.500 0v17" stroke="#555" /><path d="M4 13h8M9 10l3 3-3 3" stroke="#dc8035" strokeWidth="2" /></Icon>
              Mark on Track <CaretGap $w={6}><Caret /></CaretGap>
            </PushTrack>
          </ToolRow>
          <ToolRow>
            <IconBtn aria-label="Outdent"><Icon><path d="M0 1.500h9M0 4.500h6M0 7.500h4" stroke={GREY} strokeWidth="1.300" /><path d="M16 11H7M10.500 7 6.500 11l4 4" stroke="#5fa58c" strokeWidth="2" /></Icon></IconBtn>
            <IconBtn aria-label="Indent"><Icon><path d="M6 1.500h10M9 4.500h7M12 7.500h4" stroke={GREY} strokeWidth="1.300" /><path d="M0 11h9M5.500 7l4 4-4 4" stroke="#5fa58c" strokeWidth="2" /></Icon></IconBtn>
            <InnerRule />
            <IconBtn aria-label="Split task"><Icon><path d="M1 5h6v6H1zM9 5h6v6H9z" fill={BLUE} /><path d="M1 8h14" stroke={BLUE} /><path d="M8 0v4M4 1l2 3M12 1l-2 3M8 16v-4M4 15l2-3M12 15l-2-3" stroke="#6a6a6a" /></Icon></IconBtn>
            <InnerRule />
            <LinkBtn aria-label="Link"><Icon><Chain /></Icon></LinkBtn>
            <IconBtn aria-label="Unlink"><Icon><path d="M6 5H3.500a2.500 2.500 0 0 0 0 6H6M10 5h2.500a2.500 2.500 0 0 1 0 6H10" stroke={GREY} strokeWidth="2" /><path d="M8 0v4M4 0l2 3M12 0l-2 3M8 16v-4M4 16l2-3M12 16l-2-3" stroke="#dc8035" strokeWidth="1.200" /></Icon></IconBtn>
            <TrackBtn><Icon><g transform="translate(0 -4)"><Chain /></g><path d="M6 11l3 4 6-9" stroke="#d2513c" strokeWidth="2" /></Icon>Respect Links</TrackBtn>
          </ToolRow>
        </Rows>
      </GroupBody>
      <GroupLabel>Schedule</GroupLabel>
    </Group>
    <Rule />
    <Group $w={258}>
      <GroupBody $pad={8}>
        <Big $w={54} $on><BigIcon><Pin size={29} /></BigIcon><BigLine>Manually</BigLine><BigLine>Schedule</BigLine></Big>
        <Big $w={52}><BigIcon><Icon w={28} h={26}><path d="M0 2h23v13H0z" fill={BLUE} /><path d="M13 13h7V8l8 8.500-8 9V19h-7z" fill="#f2f2f2" /><path d="M14 17.500h12M19.500 10.500l7 7-7 7" stroke={GREY} strokeWidth="2.500" /></Icon></BigIcon><BigLine>Auto</BigLine><BigLine>Schedule</BigLine></Big>
        <TasksRule $h={56} />
        <Big $w={44}><BigIcon><Icon w={30} h={30}><path d="M0 3h24v13H0z" fill={BLUE} /><path d="M21 8l9.500 10.500L21 29.500 11 18.500z" fill="#edc67a" stroke="#f2f2f2" /><path d="M18 15.500c0-4 6-4 6 0 0 2.500-3 2.500-3 5.500M21 22.500v2.500" stroke="#222" strokeWidth="1.800" /></Icon></BigIcon><BigLine>Inspect</BigLine><BigLine><Caret /></BigLine></Big>
        <Big $w={42}><BigIcon><GridPic><path d="M5 10h7v6H5z" fill={BLUE} /><path d="M13 21h9v-4l8 7-8 6v-4h-9z" fill="#f2f2f2" /><path d="M14 24h13M22 18l6 6-6 6" stroke="#dc8035" strokeWidth="2.500" /></GridPic></BigIcon><BigLine>Move</BigLine><BigLine><Caret /></BigLine></Big>
        <Big $w={41}><BigIcon><GridPic><path d="M15 8h14v22H15z" fill="#f2f2f2" fillOpacity=".8" /><path d="M17.500 15c0-6 10-6 10 0 0 4-5 4-5 9M22.500 26v3.500" stroke={BLUE} strokeWidth="3.200" /></GridPic></BigIcon><BigLine>Mode</BigLine><BigLine><Caret /></BigLine></Big>
      </GroupBody>
      <GroupLabel>Tasks</GroupLabel>
    </Group>
    <Rule />
    <Group $w={170}>
      <GroupBody $pad={8}>
        <Big $w={42}><BigIcon><Icon w={28} h={28}><path d="M4 9h24v13H4z" fill={BLUE} /><path d="M3 0h6v3h4v7H9v3H3v-3H0V3h3z" fill="#f2f2f2" /><Plus /></Icon></BigIcon><BigLine>Task</BigLine><BigLine><Caret /></BigLine></Big>
        <Big $w={55}><BigIcon><Icon w={30} h={28}><path d="M5 20V10.500h23V20" stroke={GREY} strokeWidth="2" /><path d="M0 0h13v13H0z" fill="#f2f2f2" /><path d="M5 20v-6" stroke={GREY} strokeWidth="2" /><Plus /></Icon></BigIcon><BigLine>Summary</BigLine></Big>
        <Big $w={58}><BigIcon><Icon w={26} h={28}><path d="M14 3l12 12-12 12L3 15z" fill={GREY} /><path d="M3 0h6v3h4v6H9v4H3V9H0V3h3z" fill="#f2f2f2" /><Plus /></Icon></BigIcon><BigLine>Milestone</BigLine></Big>
      </GroupBody>
      <GroupLabel>Insert</GroupLabel>
    </Group>
    <Rule />
    <Group $w={197}>
      <GroupBody>
        <Big $w={70}><BigIcon><Icon w={29} h={28}><path d="M.5 1h28v26H.5z" fill="#fff" stroke={GREY} /><path d="M0 0h29v6H0z" fill={BLUE} /><path d="M4 14h9v5H4z" fill={BLUE} /><path d="M15.500 9v15" stroke={GREY} /><path d="M18 11.500h8M18 14.500h8M18 17.500h8M18 20.500h8M18 23.500h8" stroke="#b5b5b5" /></Icon></BigIcon><BigLine>Information</BigLine></Big>
        <SmallCol>
          <Small><Icon><path d="M1 1h14v14H7L1 9z" fill="#ecc680" /><path d="M1 9h6v6z" fill="#d9a84f" /></Icon>Notes</Small>
          <Small><Icon><path d="M.5.5h15v15H.5z" fill="#fff" stroke={GREY} /><path d="M0 0h16v3H0z" fill="#5b7c9d" /><path d="M3 6.500h4M9 6.500h4M3 9.500h4v3H3zM9 9.500h4v3H9z" stroke={GREY} /></Icon>Details</Small>
          <Small $on><Icon><path d="M0 .5h4M6 .5h4M12 .5h4" stroke="#555" /><path d="M1 6V3.500h14V6" fill="#fff" stroke="#555" /><path d="M6 9h10v7H6z" fill={BLUE} /><path d="M5 6v8M1.500 10h7" stroke="#71a88f" strokeWidth="2.200" /></Icon>Add to Timeline</Small>
        </SmallCol>
      </GroupBody>
      <GroupLabel>Properties</GroupLabel>
    </Group>
    <Rule />
    <Group $w={122}>
      <GroupBody $pad={5}>
        <Big $w={46}><BigIcon><Icon w={26} h={26}><path d="M0 2h24v13H0z" fill={BLUE} /><path d="M15 5v17l4-3.500 3 6 3-1.500-3-6h5z" fill="#fff" stroke={GREY} /></Icon></BigIcon><BigLine>Scroll</BigLine><BigLine>to Task</BigLine></Big>
        <SmallCol>
          <Small><Icon w={15} h={15}><circle cx="9" cy="5.500" r="4.500" stroke={BLUE} strokeWidth="2" /><path d="M6 9l-5 5" stroke={BLUE} strokeWidth="2.500" /></Icon>Find<CaretGap $w={7}><Caret /></CaretGap></Small>
          <Small><Icon w={15} h={15}><path d="M9 2l4 2-5 8-5-3z" fill="#e08a9b" /><path d="M2.500 10l4 3-2 1.500-3-2z" fill="#f0b6c1" /></Icon>Clear<Caret /></Small>
          <Small><Icon w={15} h={16}><path d="M.5.5h14v15H.5z" fill="#fff" stroke={GREY} /><path d="M0 0h15v4H0z" fill={GREY} /><path d="M7.500 5v8M4 9.500l3.500 4 3.500-4" stroke={BLUE} strokeWidth="1.800" /></Icon>Fill<Caret /></Small>
        </SmallCol>
      </GroupBody>
      <GroupLabel>Editing</GroupLabel>
    </Group>
    <Rule />
    <RibbonEnd><Icon w={10} h={7}><path d="M1 6l4-4 4 4" stroke={GREY} strokeWidth="2" /></Icon></RibbonEnd>
  </Ribbon>
);

const Timeline = () => (
  <Pane>
    <SideLabel $tone="#6a6a6a"><span>TIMELINE</span></SideLabel>
    <TimelineBody>
      <EdgeDate>Start<br />Mon 7/2/18</EdgeDate>
      <Track>
        {months.map(([m, x]) => <MonthTick key={m} style={{ left: `${x}%` }}>{m}</MonthTick>)}
        <TodayMark style={{ left: `${at(2019, 2, 1)}%` }}><TodayBadge>Today</TodayBadge><TodayLine /></TodayMark>
        <Lanes>
          {lanes.map((lane, i) => (
            <Lane key={i}>
              {lane.map((b) => (
                <Bar key={b.name} $edge={b.edge} $sel={b.sel} style={{ left: `${b.from}%`, width: `${b.to - b.from}%` }}>
                  <BarName>{b.name}</BarName>
                  <BarDates>{b.dates}</BarDates>
                </Bar>
              ))}
            </Lane>
          ))}
        </Lanes>
      </Track>
      <EdgeDate $end>Finish<br />Thu 10/31/19</EdgeDate>
    </TimelineBody>
  </Pane>
);

const HeadCaret = () => <Caret color="#3b7a3d" />;

const GanttSheet = () => (
  <Sheet>
    <colgroup>{widths.map((w, i) => <col key={i} width={w} />)}</colgroup>
    <thead>
      <tr>
        <HeadCorner />
        <HeadCell><HeadInner $center><Icon w={17} h={17}><circle cx="8.500" cy="8.500" r="8.500" fill={BLUE} /><path d="M8.500 7v6.500M8.500 3v2.500" stroke="#fff" strokeWidth="2.500" /></Icon></HeadInner></HeadCell>
        <HeadCell><HeadInner><HeadText>{"Task\nMode"}</HeadText><HeadCaret /></HeadInner></HeadCell>
        {columns.map((c) => <HeadCell key={c}><HeadInner><HeadText>{c}</HeadText><HeadCaret /></HeadInner></HeadCell>)}
      </tr>
    </thead>
    <tbody>
      {rows.map((r, i) => {
        const s = { $sel: r.sel, $above: rows[i + 1]?.sel, $big: r.big };
        return (
          <tr key={r.id}>
            <RowId $sel={r.sel} scope="row">{r.id}</RowId>
            <Cell {...s}>{r.mark && <IconCell><Icon w={14} h={13}><path d="M.5.5h13v12H.5z" fill="#fff" stroke="#3e6da8" /><path d="M0 0h14v3H0z" fill="#3e6da8" /><path d="M1 6.500h12M1 9.500h12M4.500 3v9M7.500 3v9M10.500 3v9" stroke="#5c86ba" /><path d="M10 7h4v3h-4z" fill="#2aa0dc" /></Icon></IconCell>}</Cell>
            <Cell {...s}>{r.sel ? <IconCell><Pin size={15} color="#3fa3a6" /></IconCell> : <ModeCell><AutoSmall /></ModeCell>}</Cell>
            <Cell {...s}>
              <TaskName $level={r.level}>
                {r.level === 0 ? <NoToggle /> : r.open
                  ? <Icon w={7} h={7}><path d="M7 0v7H0z" fill="#222" /></Icon>
                  : <Icon w={7} h={9}><path d="M.5.5v8l5-4z" stroke="#8a8a8a" /></Icon>}
                {r.name}
              </TaskName>
            </Cell>
            <Cell {...s}>{r.dur}</Cell>
            <Cell {...s}>{r.start}</Cell>
            <Cell {...s}>{r.finish}</Cell>
            <Cell {...s}>{r.pred}</Cell>
            <Cell {...s} />
            <Cell {...s} />
          </tr>
        );
      })}
      {[0, 1, 2, 3, 4, 5].map((i) => (
        <tr key={i}>
          <RowId $last={i === 5} />
          {widths.slice(1).map((_, j) => <Cell key={j} $last={i === 5} />)}
        </tr>
      ))}
    </tbody>
  </Sheet>
);

const SpinButtons = ({ name }: { name: string }) => (
  <Spin>
    <SpinBtn type="button" aria-label={`${name} up`}><Icon w={5} h={3}><path d="M0 3h5L2.500 0z" fill="#000" /></Icon></SpinBtn>
    <SpinBtn type="button" aria-label={`${name} down`}><Icon w={5} h={3}><path d="M0 0h5L2.500 3z" fill="#000" /></Icon></SpinBtn>
  </Spin>
);
const Chevron = () => <Icon w={9} h={5}><path d="M.5.5l4 4 4-4" stroke="#444" /></Icon>;

const TaskDialog = () => {
  const name = useRef<HTMLInputElement>(null);
  useEffect(() => {
    name.current?.focus();
    name.current?.select();
  }, []);
  return (
    <Dialog aria-label="Task Information" onSubmit={(e) => e.preventDefault()}>
      <DialogTitle>Task Information<button type="button" aria-label="Close dialog"><Close c="#111" s={11} /></button></DialogTitle>
      <DialogTabs>
        <DialogTab type="button" $w={55} $on>General</DialogTab>
        <DialogTab type="button" $w={77}>Predecessors</DialogTab>
        <DialogTab type="button" $w={64}>Resources</DialogTab>
        <DialogTab type="button" $w={62}>Advanced</DialogTab>
        <DialogTab type="button" $w={48}>Notes</DialogTab>
        <DialogTab type="button" $w={84}>Custom Fields</DialogTab>
      </DialogTabs>
      <DialogBody>
        <Line>
          <FieldLabel $w={40} htmlFor="t-name"><u>N</u>ame:</FieldLabel>
          <TextBox id="t-name" ref={name} defaultValue="Philippines" />
          <RightFields>
            <FieldLabel $w={57} htmlFor="t-dur"><u>D</u>uration:</FieldLabel>
            <TextBox $w={50} id="t-dur" defaultValue="12 days" />
            <SpinButtons name="Duration" />
            <Check><Tick type="checkbox" /><span><u>E</u>stimated</span></Check>
          </RightFields>
        </Line>
        <Line>
          <FieldLabel $w={99} htmlFor="t-pct"><u>P</u>ercent complete:</FieldLabel>
          <TextBox $w={50} id="t-pct" defaultValue="0%" />
          <SpinButtons name="Percent" />
          <RightAuto>
            <FieldLabel $w={47} htmlFor="t-pri">Priorit<u>y</u>:</FieldLabel>
            <TextBox $w={50} id="t-pri" defaultValue="500" />
            <SpinButtons name="Priority" />
          </RightAuto>
        </Line>
        <ModeRow>
          <ModeLabel>Schedule Mode:</ModeLabel>
          <ModeChoices>
            <Check><Tick type="radio" name="mode" defaultChecked /><span><u>M</u>anually Scheduled</span></Check>
            <Check><Tick type="radio" name="mode" /><span><u>A</u>uto Scheduled</span></Check>
          </ModeChoices>
        </ModeRow>
        <DatesHead>Dates</DatesHead>
        <DatesRow>
          <label htmlFor="t-start"><u>S</u>tart:</label>
          <DatePick><DateSelect id="t-start" defaultValue="Mon 2/25/19"><option>Mon 2/25/19</option></DateSelect><Chevron /></DatePick>
          <label htmlFor="t-finish"><u>F</u>inish:</label>
          <DatePick><DateSelect id="t-finish" defaultValue="Tue 3/12/19"><option>Tue 3/12/19</option></DateSelect><Chevron /></DatePick>
        </DatesRow>
        <Check><Tick type="checkbox" defaultChecked /><span>Display on <u>T</u>imeline</span></Check>
        <Check><Tick type="checkbox" /><span><u>H</u>ide Bar</span></Check>
        <Check><Tick type="checkbox" /><span>Rollup</span></Check>
        <Buttons>
          <PushButton type="button" $left><u>H</u>elp</PushButton>
          <PushButton type="submit" $main>OK</PushButton>
          <PushButton type="button">Cancel</PushButton>
        </Buttons>
      </DialogBody>
    </Dialog>
  );
};

const Status = () => (
  <StatusBar>
    <Busy>Busy</Busy>
    <NewTasks><Pin size={14} color="#4a4a4a" needle="#4a4a4a" />New Tasks : Manually Scheduled</NewTasks>
    <ViewButtons>
      <ViewButton $on aria-label="Gantt chart"><Icon w={14} h={13}><path d="M.5.5h13v12H.5z" stroke={GREY} /><path d="M3 3.500h4M4 6.500h5M7 9.500h4" stroke={GREY} strokeWidth="1.500" /></Icon></ViewButton>
      <ViewButton aria-label="Task usage"><Icon w={14} h={13}><path d="M0 0h14v4H0z" fill={GREY} /><path d="M.5 4v8.500M5.500 4v8.500M9.500 4v8.500M13.500 4v8.500M5 7.500h9M5 10.500h9M0 12.500h14" stroke={GREY} /></Icon></ViewButton>
      <ViewButton aria-label="Team planner"><Icon w={14} h={13}><path d="M.5.5h13v12H.5zM.5 9.500h13M4.500 9v3.500M9.500 4v9" stroke={GREY} /><path d="M0 4h9v5H0zM10 0h4v4h-4z" fill={GREY} /></Icon></ViewButton>
      <ViewButton aria-label="Resource sheet"><Icon w={14} h={13}><path d="M.5.5h13v12H.5zM4.500 0v13M9.500 0v13M0 4.500h14M0 8.500h14" stroke={GREY} /></Icon></ViewButton>
      <ViewButton aria-label="Report"><Icon w={14} h={13}><path d="M3.500 3V.5h10v12h-10V10M3.500 5v3" stroke={GREY} /><path d="M1 4h4M1 9h4" stroke={GREY} strokeWidth="2" /></Icon></ViewButton>
    </ViewButtons>
    <Icon w={11} h={9}><path d="M3 4.500h6" stroke="#555" strokeWidth="2" /></Icon>
    <ZoomSlider type="range" aria-label="Zoom" min={0} max={100} defaultValue={8} />
    <Icon w={8} h={9}><path d="M0 4.500h8M4 0v9" stroke="#555" strokeWidth="2" /></Icon>
  </StatusBar>
);

const WindowsTaskBar = () => (
  <TaskBar>
    <Start>
      <StartItem aria-label="Start"><Icon w={16} h={16}><path d="M0 2.200 6.800 1.300v6.200H0zM7.800 1.200 16 0v7.500H7.800zM0 8.500h6.800v6.200L0 13.800zM7.800 8.500H16V16l-8.200-1.200z" fill="#fff" /></Icon></StartItem>
      <StartItem aria-label="Task view"><Icon w={16} h={16}><path d="M.5 3V0M10.500 3V0M0 2.500h11M.5 5.500h10v5H.5zM.5 16v-2.500h10V16M14.500 0v16" stroke="#fff" /><path d="M13 5h3v3h-3z" fill="#fff" /></Icon></StartItem>
      <StartItem aria-label="Server"><Icon w={22} h={16}><path d="M3 1h18l-2 14H1z" fill="#8cbbe0" /><path d="M6 4h12l-1 8H5z" fill="#2e6da8" /><path d="M8 6h8M8 9h7" stroke="#d8ecfb" strokeWidth="1.500" /></Icon></StartItem>
      <StartItem $tight aria-label="Database"><Icon w={24} h={24}><path d="M2 2q5-3 10 0v11q-5 3-10 0z" fill="#f0b429" /><path d="M2 2q5-3 10 0-5 3-10 0" fill="#ffe08a" /><path d="M16 1h6v7M2 16v7h6" stroke="#3d8f45" strokeWidth="2" /><path d="M12 22l8-9M13 13l8 9" stroke="#b8bcc0" strokeWidth="2" /></Icon></StartItem>
    </Start>
    <AppList>
      {taskApps.map(([t, icon]) => <AppButton key={t}>{icon}{t}</AppButton>)}
      <AppButton $on><OfficeIcon letter="P" c="#31752f" />Project S...</AppButton>
    </AppList>
    <Tray>
      <Icon w={12} h={7}><path d="M1 6.500l5-5 5 5" stroke="#fff" strokeWidth="1.500" /></Icon>
      <Icon w={17} h={14}><path d="M4 4.500h11v8H4zM16 7v3" stroke="#fff" strokeWidth="1.400" /><path d="M6 6h7v5H6z" fill="#fff" /><path d="M1 0v3M4 0v3M0 3h5v3H0z" stroke="#fff" /></Icon>
      <Icon w={16} h={15}><path d="M3.500 1.500h12v8h-12zM9.500 10v3M6 13.500h8" stroke="#fff" strokeWidth="1.200" /><path d="M.5 4v7h4V8" stroke="#fff" /></Icon>
      <Icon w={16} h={14}><path d="M1 5h3l3-3v10L4 9H1z" stroke="#fff" /><path d="M9.500 4.500q2 2.500 0 5M11.500 3q3.500 4 0 8" stroke="#fff" /><path d="M13.500 1.500q4.500 5.500 0 11" stroke="#777" /></Icon>
      <Icon w={17} h={15}><path d="M1 10q-1-4 3-4 1-4 5-4 4 0 4.500 4Q16 6 16 9l-2 3H3q-2 0-2-2z" fill="#1b78d0" /><circle cx="12" cy="10.500" r="4" fill="#dfe9f3" /><path d="M10 10.500h4M12.500 9l1.500 1.500-1.500 1.500" stroke="#1b78d0" /></Icon>
      <Icon w={14} h={13}><path d="M3.500 0 7 2.200 3.500 4.500 0 2.200zM10.500 0 14 2.200l-3.500 2.300L7 2.200zM3.500 4.700 7 7 3.500 9.200 0 7zM10.500 4.700 14 7l-3.500 2.200L7 7zM7 8l3.500 2.300L7 12.500l-3.500-2.200z" fill="#fff" /></Icon>
      <Clock>2:01 PM<br />2/1/2019</Clock>
      <Icon w={17} h={16}><path d="M1 1h15v11h-5v3l-3.500-3H1z" stroke="#fff" strokeWidth="1.300" /></Icon>
    </Tray>
  </TaskBar>
);

export default function App() {
  return (
    <App_>
      <GlobalStyle />
      <HeaderBar />
      <RibbonBar />
      <Timeline />
      <Splitter />
      <Pane $grow>
        <SideLabel $tone="#3b7a3d"><span>GANTT CHART</span></SideLabel>
        <GanttSheet />
        <ChartPane><ChartRow /></ChartPane>
        <ScrollEdge />
        <ScrollBar>
          <ScrollBtn aria-label="Scroll up"><Icon w={7} h={4}><path d="M0 4h7L3.500 0z" fill={GREY} /></Icon></ScrollBtn>
          <ScrollThumb />
          <ScrollBtn aria-label="Scroll down"><Icon w={7} h={4}><path d="M0 0h7L3.500 4z" fill={GREY} /></Icon></ScrollBtn>
        </ScrollBar>
      </Pane>
      <Status />
      <WindowsTaskBar />
      <BlackNote $x={651} $y={566} $c="#fff22d">"Display on Timeline" is checked in both cases.</BlackNote>
      <TaskDialog />
      <Ring $x={1192} $y={544} width="448" height="134"><ellipse cx="224" cy="67" rx="221" ry="64" fill="none" stroke="#22b14c" strokeWidth="5" /></Ring>
      <Ring $x={1157} $y={638} width="74" height="60"><ellipse cx="37" cy="30" rx="34" ry="27" fill="none" stroke="#fff200" strokeWidth="5" /></Ring>
      <Ring $x={569} $y={829} width="218" height="72"><ellipse cx="109" cy="36" rx="106" ry="33" fill="none" stroke="#e31b23" strokeWidth="5" /></Ring>
      <Note $x={1334} $y={688} $c="#22b14c">Put dates in here works</Note>
      <Note $x={608} $y={911} $c="#e31b23">Putting dates here does not work</Note>
    </App_>
  );
}
